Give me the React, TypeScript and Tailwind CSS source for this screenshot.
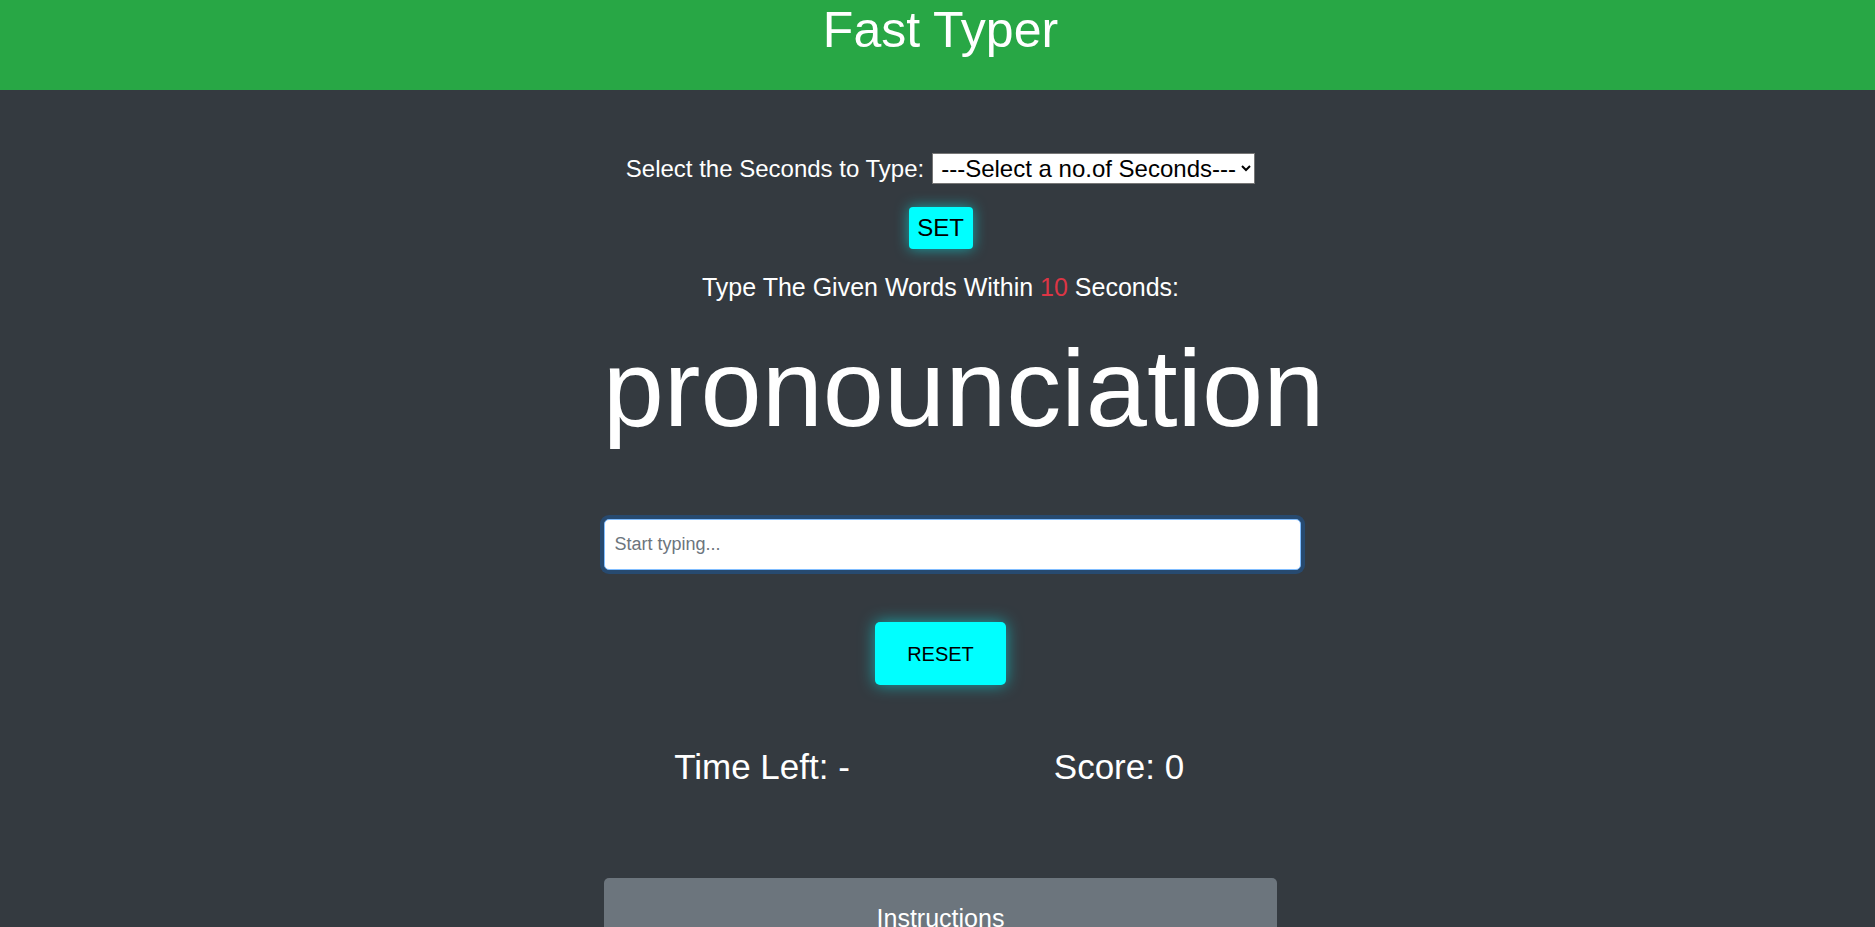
import { useState } from "react";

const SECONDS = [5, 10, 15, 20, 30];

export default function App() {
  const [text, setText] = useState("");

  return (
    <div className="min-h-screen bg-[#343a40] pl-[6px] font-['Liberation_Sans',Arial,sans-serif] text-white">
      {/* Header */}
      <header className="-ml-[6px] h-[90px] bg-[#28a745] pl-[6px]">
        <h1 className="text-center text-[50px] leading-[60px] font-normal">Fast Typer</h1>
      </header>

      <main className="flex flex-col items-center">
        {/* Seconds picker */}
        <div className="mt-[63px] flex items-center gap-[8px] text-[24px] leading-[29px]">
          <label htmlFor="seconds">Select the Seconds to Type:</label>
          <select
            id="seconds"
            defaultValue=""
            className="h-[31px] w-[323px] border border-[#767676] bg-white pl-[4px] text-[24px] leading-[28px] text-black"
          >
            <option value="">---Select a no.of Seconds---</option>
            {SECONDS.map((s) => (
              <option key={s} value={s}>
                {s}
              </option>
            ))}
          </select>
        </div>

        <button className="mt-[23px] h-[42px] w-[64px] rounded-[4px] bg-[#00ffff] text-[24px] leading-[28px] text-black shadow-[0_0_14px_rgba(0,255,255,0.55)]">
          SET
        </button>

        <p className="mt-[24px] text-[25px] leading-[29px]">
          Type The Given Words Within <span className="text-[#dc3545]">10</span> Seconds:
        </p>

        {/* Current word */}
        <h2 className="mt-[20px] ml-[46px] text-[110px] leading-[132px] font-normal">pronounciation</h2>

        <input
          autoFocus
          value={text}
          onChange={(e) => setText(e.target.value)}
          placeholder="Start typing..."
          className="mt-[65px] ml-[23px] h-[51px] w-[697px] rounded-[5px] border border-[#80bdff] bg-white px-[10px] text-[18px] text-[#495057] shadow-[0_0_0_4px_rgba(0,123,255,0.25)] outline-none placeholder:text-[#6c757d]"
        />

        <button
          onClick={() => setText("")}
          className="mt-[52px] h-[63px] w-[131px] rounded-[5px] bg-[#00ffff] text-[20px] text-black shadow-[0_0_16px_rgba(0,255,255,0.55)]"
        >
          RESET
        </button>

        {/* Stats */}
        <div className="mt-[61px] grid w-[714px] grid-cols-2 text-center text-[35px] leading-[42px]">
          <h3>Time Left: -</h3>
          <h3>Score: 0</h3>
        </div>

        {/* Instructions */}
        <div className="mt-[90px] mb-[40px] w-[673px] rounded-[5px] bg-[#6c757d] px-[25px] pt-[25px] pb-[25px] text-center">
          <h4 className="text-[25px] leading-[30px]">Instructions</h4>
          <ul className="mt-[15px] space-y-[6px] text-left text-[20px]">
            <li>Select the number of seconds and press SET.</li>
            <li>Type the given word in the box before time runs out.</li>
            <li>Each correct word adds one point to your score.</li>
          </ul>
        </div>
      </main>
    </div>
  );
}
